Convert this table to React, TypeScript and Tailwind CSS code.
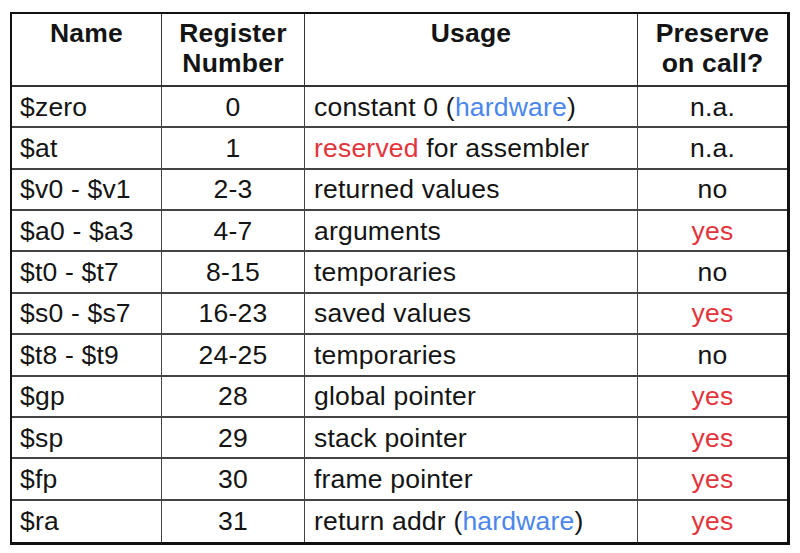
import React from "react";

const BLUE = "text-[#4a86ec]";
const RED = "text-[#e3343b]";

type Row = { name: string; num: string; usage: React.ReactNode; pres: React.ReactNode };

const rows: Row[] = [
  { name: "$zero", num: "0", usage: <>constant 0 (<span className={BLUE}>hardware</span>)</>, pres: "n.a." },
  { name: "$at", num: "1", usage: <><span className={RED}>reserved</span> for assembler</>, pres: "n.a." },
  { name: "$v0 - $v1", num: "2-3", usage: "returned values", pres: "no" },
  { name: "$a0 - $a3", num: "4-7", usage: "arguments", pres: <span className={RED}>yes</span> },
  { name: "$t0 - $t7", num: "8-15", usage: "temporaries", pres: "no" },
  { name: "$s0 - $s7", num: "16-23", usage: "saved values", pres: <span className={RED}>yes</span> },
  { name: "$t8 - $t9", num: "24-25", usage: "temporaries", pres: "no" },
  { name: "$gp", num: "28", usage: "global pointer", pres: <span className={RED}>yes</span> },
  { name: "$sp", num: "29", usage: "stack pointer", pres: <span className={RED}>yes</span> },
  { name: "$fp", num: "30", usage: "frame pointer", pres: <span className={RED}>yes</span> },
  { name: "$ra", num: "31", usage: <>return addr (<span className={BLUE}>hardware</span>)</>, pres: <span className={RED}>yes</span> },
];

export default function App() {
  return (
    <div className="w-[800px] h-[553px] bg-white pt-[12px] pl-[10px]" style={{ fontFamily: '"Liberation Sans", Arial, sans-serif' }}>
      <div className="w-[780px] h-[533px] border-l-2 border-t-2 border-r-[3px] border-b-[3px] border-[#111] grid grid-cols-[150px_143px_333px_1fr] grid-rows-[73px_repeat(11,1fr)] text-[26.5px] leading-[30px] text-[#141414] tracking-[0.2px]">
        <div className="border-r-[1.5px] border-b-2 border-[#333] font-bold text-center pt-[4px]">Name</div>
        <div className="border-r-[1.5px] border-b-2 border-[#333] font-bold text-center pt-[4px]">Register<br />Number</div>
        <div className="border-r-[1.5px] border-b-2 border-[#333] font-bold text-center pt-[4px]">Usage</div>
        <div className="border-b-2 border-[#333] font-bold text-center pt-[4px]">Preserve<br />on call?</div>
        {rows.map((r, i) => {
          const b = i < rows.length - 1 ? "border-b-2" : "";
          return (
            <React.Fragment key={i}>
              <div className={`border-r-[1.5px] ${b} border-[#444] flex items-center pl-[8px]`}><span>{r.name}</span></div>
              <div className={`border-r-[1.5px] ${b} border-[#444] flex items-center justify-center`}><span>{r.num}</span></div>
              <div className={`border-r-[1.5px] ${b} border-[#444] flex items-center pl-[9px]`}><span>{r.usage}</span></div>
              <div className={`${b} border-[#444] flex items-center justify-center`}><span>{r.pres}</span></div>
            </React.Fragment>
          );
        })}
      </div>
    </div>
  );
}
